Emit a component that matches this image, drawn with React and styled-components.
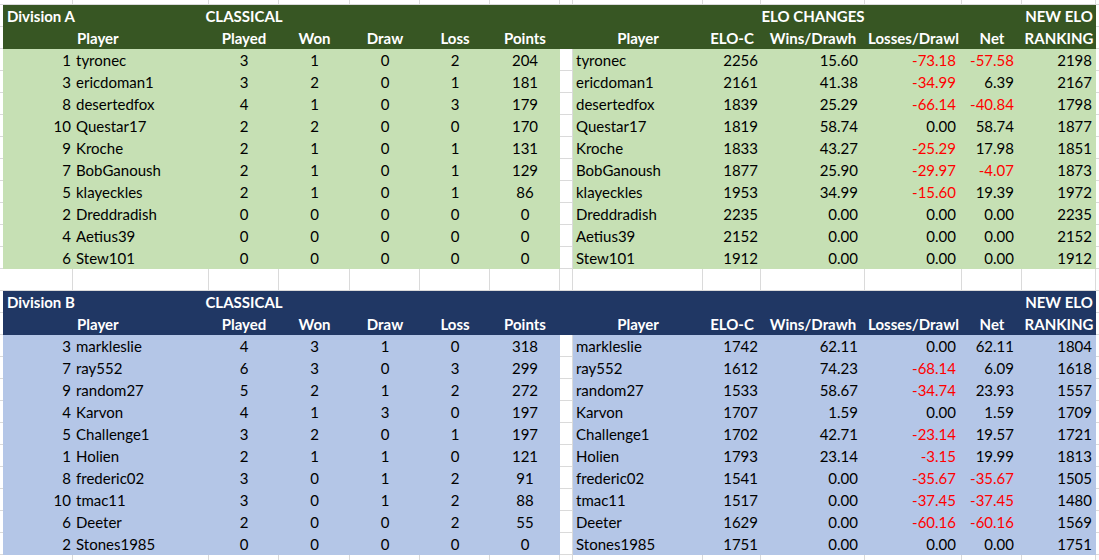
import React from 'react';
import styled, { createGlobalStyle } from 'styled-components';

const COLS = '3px 70px 136px 70px 71px 70px 70px 70px 13px 130px 58px 104px 97px 60px 74px 1fr';
const GRID = '#dadada';
const RED = '#ff0000';

const GlobalStyle = createGlobalStyle`
  html, body {
    margin: 0;
    padding: 0;
    background: #fff;
  }
  body {
    font-family: Lato, "Liberation Sans", sans-serif;
    font-size: 15px;
    color: #000;
  }
`;

const Sheet = styled.div`
  display: flex;
  flex-direction: column;
  width: 1099px;
  height: 560px;
  overflow: hidden;
`;

const SheetRow = styled.div`
  display: grid;
  grid-template-columns: ${COLS};
  height: ${p => p.$h || 22}px;
  flex-shrink: 0;
`;

const Cell = styled.div`
  display: flex;
  align-items: center;
  justify-content: ${p =>
    p.$align === 'right' ? 'flex-end' : p.$align === 'center' ? 'center' : 'flex-start'};
  padding: 0 ${p => (p.$pr != null ? p.$pr : 3)}px 0 ${p => (p.$pl != null ? p.$pl : 3)}px;
  min-width: 0;
  white-space: nowrap;
  line-height: 22px;
  background: ${p => p.$bg || '#fff'};
  box-shadow: ${p => (p.$bg ? 'none' : `inset -1px -1px 0 ${GRID}`)};
  color: ${p => (p.$neg ? RED : p.$light ? '#fff' : '#000')};
  font-weight: ${p => (p.$bold ? 700 : 400)};
`;

// text that spills over into the neighbouring empty cells, as in a sheet
const Spill = styled.span`
  position: relative;
  z-index: 1;
`;

const divisions = [
  {
    name: 'Division A',
    head: '#375623',
    body: '#c6e0b4',
    eloChanges: true,
    rows: [
      [1, 'tyronec', 3, 1, 0, 2, 204, 2256, '15.60', '-73.18', '-57.58', 2198],
      [3, 'ericdoman1', 3, 2, 0, 1, 181, 2161, '41.38', '-34.99', '6.39', 2167],
      [8, 'desertedfox', 4, 1, 0, 3, 179, 1839, '25.29', '-66.14', '-40.84', 1798],
      [10, 'Questar17', 2, 2, 0, 0, 170, 1819, '58.74', '0.00', '58.74', 1877],
      [9, 'Kroche', 2, 1, 0, 1, 131, 1833, '43.27', '-25.29', '17.98', 1851],
      [7, 'BobGanoush', 2, 1, 0, 1, 129, 1877, '25.90', '-29.97', '-4.07', 1873],
      [5, 'klayeckles', 2, 1, 0, 1, 86, 1953, '34.99', '-15.60', '19.39', 1972],
      [2, 'Dreddradish', 0, 0, 0, 0, 0, 2235, '0.00', '0.00', '0.00', 2235],
      [4, 'Aetius39', 0, 0, 0, 0, 0, 2152, '0.00', '0.00', '0.00', 2152],
      [6, 'Stew101', 0, 0, 0, 0, 0, 1912, '0.00', '0.00', '0.00', 1912],
    ],
  },
  {
    name: 'Division B',
    head: '#203764',
    body: '#b4c6e7',
    eloChanges: false,
    rows: [
      [3, 'markleslie', 4, 3, 1, 0, 318, 1742, '62.11', '0.00', '62.11', 1804],
      [7, 'ray552', 6, 3, 0, 3, 299, 1612, '74.23', '-68.14', '6.09', 1618],
      [9, 'random27', 5, 2, 1, 2, 272, 1533, '58.67', '-34.74', '23.93', 1557],
      [4, 'Karvon', 4, 1, 3, 0, 197, 1707, '1.59', '0.00', '1.59', 1709],
      [5, 'Challenge1', 3, 2, 0, 1, 197, 1702, '42.71', '-23.14', '19.57', 1721],
      [1, 'Holien', 2, 1, 1, 0, 121, 1793, '23.14', '-3.15', '19.99', 1813],
      [8, 'frederic02', 3, 0, 1, 2, 91, 1541, '0.00', '-35.67', '-35.67', 1505],
      [10, 'tmac11', 3, 0, 1, 2, 88, 1517, '0.00', '-37.45', '-37.45', 1480],
      [6, 'Deeter', 2, 0, 0, 2, 55, 1629, '0.00', '-60.16', '-60.16', 1569],
      [2, 'Stones1985', 0, 0, 0, 0, 0, 1751, '0.00', '0.00', '0.00', 1751],
    ],
  },
];

const SPAN = 16;

function BlankRow({ h }) {
  return (
    <SheetRow $h={h}>
      {Array.from({ length: SPAN }, (_, i) => (
        <Cell key={i} />
      ))}
    </SheetRow>
  );
}

function HeaderRows({ div }) {
  const H = p => <Cell $bg={div.head} $light $bold $align="center" {...p} />;
  return (
    <>
      <SheetRow>
        <Cell />
        <H $align="left" $pl={4}><Spill>{div.name}</Spill></H>
        <H />
        <H><Spill>CLASSICAL</Spill></H>
        <H />
        <H />
        <H />
        <H />
        <H />
        <H />
        <H />
        <H>{div.eloChanges ? 'ELO CHANGES' : ''}</H>
        <H />
        <H />
        <H>NEW ELO</H>
        <Cell />
      </SheetRow>
      <SheetRow>
        <Cell />
        <H />
        <H $align="left" $pl={4}>Player</H>
        <H>Played</H>
        <H>Won</H>
        <H>Draw</H>
        <H>Loss</H>
        <H>Points</H>
        <H />
        <H>Player</H>
        <H>ELO-C</H>
        <H>Wins/Drawh</H>
        <H>Losses/Drawl</H>
        <H>Net</H>
        <H>RANKING</H>
        <Cell />
      </SheetRow>
    </>
  );
}

const neg = v => String(v).startsWith('-');

function PlayerRow({ row, bg }) {
  const [rank, name, played, won, draw, loss, pts, elo, wins, losses, net, ranking] = row;
  return (
    <SheetRow>
      <Cell />
      <Cell $bg={bg} $align="right" $pr={2}>{rank}</Cell>
      <Cell $bg={bg}>{name}</Cell>
      <Cell $bg={bg} $align="center">{played}</Cell>
      <Cell $bg={bg} $align="center">{won}</Cell>
      <Cell $bg={bg} $align="center">{draw}</Cell>
      <Cell $bg={bg} $align="center">{loss}</Cell>
      <Cell $bg={bg} $align="center">{pts}</Cell>
      <Cell />
      <Cell $bg={bg}>{name}</Cell>
      <Cell $bg={bg} $align="right" $pr={3}>{elo}</Cell>
      <Cell $bg={bg} $align="right" $pr={7}>{wins}</Cell>
      <Cell $bg={bg} $align="right" $pr={6} $neg={neg(losses)}>{losses}</Cell>
      <Cell $bg={bg} $align="right" $pr={8} $neg={neg(net)}>{net}</Cell>
      <Cell $bg={bg} $align="right" $pr={4}>{ranking}</Cell>
      <Cell />
    </SheetRow>
  );
}

export default function App() {
  return (
    <>
      <GlobalStyle />
      <Sheet>
        <BlankRow h={5} />
        {divisions.map((div, i) => (
          <React.Fragment key={div.name}>
            {i > 0 && <BlankRow h={22} />}
            <HeaderRows div={div} />
            {div.rows.map(r => (
              <PlayerRow key={r[1]} row={r} bg={div.body} />
            ))}
          </React.Fragment>
        ))}
        <BlankRow h={22} />
      </Sheet>
    </>
  );
}
